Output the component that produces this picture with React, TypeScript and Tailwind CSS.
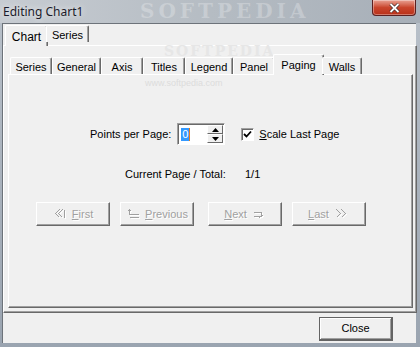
import type { ReactNode } from "react";

const body = "font-['Liberation_Sans',Arial,sans-serif] text-[11px] text-black";

function Tab({ label, w, active, cls = "" }: { label: string; w: number; active?: boolean; cls?: string }) {
  if (active)
    return (
      <div
        style={{ width: w + 4 }}
        className={`relative z-10 -mx-[2px] -mb-[1px] flex h-[21px] items-start justify-center rounded-t-[2px] border-l border-t border-r border-l-white border-t-white border-r-[#696969] bg-[#f0f0f0] pt-[2px] shadow-[inset_-1px_0_0_#a0a0a0] ${cls}`}
      >
        {label}
      </div>
    );
  return (
    <div
      style={{ width: w }}
      className={`relative z-10 flex h-[17px] items-start justify-center rounded-t-[2px] border-l border-t border-r border-l-white border-t-white border-r-[#696969] bg-[#f0f0f0] pt-[1px] shadow-[inset_-1px_0_0_#a0a0a0] ${cls}`}
    >
      {label}
    </div>
  );
}

function Btn({ children, w = 74 }: { children: ReactNode; w?: number }) {
  return (
    <div
      style={{ width: w }}
      className="flex h-[24px] items-center justify-center gap-[5px] border border-t-white border-l-white border-r-[#696969] border-b-[#696969] bg-[#f0f0f0] text-[#a0a0a0] shadow-[inset_-1px_-1px_0_#a0a0a0] [text-shadow:1px_1px_0_#fff]"
    >
      {children}
    </div>
  );
}

function Etched({ d, w = 14 }: { d: string; w?: number }) {
  return (
    <svg width={w} height="12" viewBox={`0 0 ${w} 12`} fill="none" strokeWidth="1" shapeRendering="crispEdges">
      <path d={d} stroke="#fff" transform="translate(1 1)" />
      <path d={d} stroke="#a0a0a0" />
    </svg>
  );
}

export default function App() {
  return (
    <div className={`relative flex h-[347px] w-[420px] flex-col overflow-hidden bg-gradient-to-b from-[#b9c1ca] to-[#9aa4b0] ${body}`}>
      {/* title bar */}
      <div className="relative flex h-[23px] items-center overflow-hidden bg-gradient-to-r from-[#c7ccd2] via-[#b5bcc3] to-[#a7afb8] pl-[3px]">
        <span className="absolute left-[140px] top-0 font-['DejaVu_Serif',serif] text-[20px] font-bold leading-[23px] tracking-[4px] text-white/25">
          SOFTPEDIA
        </span>
        <span className="relative font-['Noto_Sans',sans-serif] text-[12px] text-[#1b1b2a] [text-shadow:0_0_6px_#fff]">
          Editing Chart1
        </span>
        <div className="absolute right-[4px] top-0 flex h-[16px] w-[44px] items-center justify-center rounded-b-[4px] border border-t-0 border-[#5b2020] bg-gradient-to-b from-[#e8a193] via-[#c9452c] to-[#b83018] shadow-[inset_0_0_0_1px_rgba(255,255,255,0.35)]">
          <svg width="11" height="10" viewBox="0 0 11 10">
            <path d="M1.5 1 L9.5 9 M9.5 1 L1.5 9" stroke="#3a2a2a" strokeWidth="3.2" />
            <path d="M1.5 1 L9.5 9 M9.5 1 L1.5 9" stroke="#fff" strokeWidth="1.8" />
          </svg>
        </div>
      </div>

      {/* client */}
      <div className="ml-[2px] flex h-[320px] w-[414px] flex-col border-t border-l border-[#6d737a] bg-[#f0f0f0]">
        {/* outer tabs */}
        <div className="flex h-[21px] items-end pl-[2px] pt-[1px]">
          <div className="ml-[2px] flex">
            <Tab label="Chart" w={39} active cls="text-[12px]" />
            <Tab label="Series" w={43} />
          </div>
        </div>

        {/* outer page */}
        <div className="relative flex h-[268px] w-[414px] flex-col border border-t-white border-l-white border-r-[#696969] border-b-[#696969] px-[4px] shadow-[inset_-1px_-1px_0_#a0a0a0]">
          <span className="pointer-events-none absolute left-[160px] top-[-3px] font-['DejaVu_Serif',serif] text-[14px] font-bold leading-[16px] tracking-[2px] text-[#e6e6e6]">
            SOFTPEDIA
          </span>

          {/* inner tabs */}
          <div className="relative mt-[8px] flex h-[20px] items-end pl-[2px]">
            <Tab label="Series" w={42} />
            <Tab label="General" w={49} />
            <Tab label="Axis" w={42} />
            <Tab label="Titles" w={42} />
            <Tab label="Legend" w={48} />
            <Tab label="Panel" w={42} />
            <Tab label="Paging" w={47} active />
            <Tab label="Walls" w={40} />
          </div>

          {/* inner page */}
          <div className="relative flex h-[234px] w-[405px] flex-col border border-t-white border-l-white border-r-[#696969] border-b-[#696969] shadow-[inset_-1px_-1px_0_#a0a0a0]">
            <span className="pointer-events-none absolute left-[136px] top-[3px] text-[9px] leading-[10px] text-[#dcdcdc]">
              www.softpedia.com
            </span>
            <div className="ml-[81px] mt-[48px] flex h-[22px] items-center">
              <span>Points per Page:</span>
              <div className="ml-[6px] flex h-[22px] w-[48px] items-center border border-t-[#a0a0a0] border-l-[#a0a0a0] border-r-white border-b-white bg-white shadow-[inset_1px_1px_0_#696969]">
                <span className="ml-[3px] mt-[1px] bg-[#3399ff] px-[1px] leading-[13px] text-white shadow-[1px_0_0_#e07a1f]">0</span>
                <div className="ml-auto mr-[1px] flex h-[18px] w-[16px] flex-col">
                  <div className="flex h-[9px] items-center justify-center border border-t-white border-l-white border-r-[#696969] border-b-[#696969] bg-[#f0f0f0]">
                    <svg width="7" height="4" viewBox="0 0 7 4"><path d="M3.5 0 L7 4 L0 4Z" fill="#000" /></svg>
                  </div>
                  <div className="flex h-[9px] items-center justify-center border border-t-white border-l-white border-r-[#696969] border-b-[#696969] bg-[#f0f0f0]">
                    <svg width="7" height="4" viewBox="0 0 7 4"><path d="M0 0 L7 0 L3.5 4Z" fill="#000" /></svg>
                  </div>
                </div>
              </div>
              <div className="ml-[16px] flex h-[13px] w-[13px] items-center justify-center border border-t-[#a0a0a0] border-l-[#a0a0a0] border-r-white border-b-white bg-white shadow-[inset_1px_1px_0_#696969]">
                <svg width="9" height="9" viewBox="0 0 9 9">
                  <path d="M1 4 L3.5 6.5 L8 1.5" stroke="#000" strokeWidth="1.8" fill="none" />
                </svg>
              </div>
              <span className="ml-[5px]">
                <span className="underline">S</span>cale Last Page
              </span>
            </div>

            <div className="ml-[116px] mt-[22px] flex h-[14px] items-center">
              <span className="w-[120px]">Current Page / Total:</span>
              <span>1/1</span>
            </div>

            <div className="ml-[27px] mt-[21px] flex">
              <Btn>
                <Etched w={14} d="M6.5 1.5 L2.5 5.5 L6.5 9.5 M9.5 1.5 L5.5 5.5 L9.5 9.5 M11.5 1.5 L11.5 9.5" />
                <span><span className="underline">F</span>irst</span>
              </Btn>
              <div className="w-[10px]" />
              <Btn>
                <Etched w={14} d="M3.5 1.5 L3.5 6.5 L12.5 6.5 M1.5 3.5 L3.5 1.5 L5.5 3.5 M3.5 9.5 L12.5 9.5" />
                <span><span className="underline">P</span>revious</span>
              </Btn>
              <div className="w-[14px]" />
              <Btn>
                <span><span className="underline">N</span>ext</span>
                <Etched w={14} d="M1.5 4.5 L9.5 4.5 M1.5 8.5 L7.5 8.5 M9.5 4.5 L9.5 8.5 M7.5 9.5 L11.5 6.5" />
              </Btn>
              <div className="w-[10px]" />
              <Btn>
                <span><span className="underline">L</span>ast</span>
                <Etched w={16} d="M2.5 1.5 L6.5 5.5 L2.5 9.5 M7.5 1.5 L11.5 5.5 L7.5 9.5" />
              </Btn>
            </div>
          </div>
        </div>

        {/* bottom bar */}
        <div className="flex flex-1 items-start justify-end pr-[23px] pt-[4px]">
          <div className="flex h-[24px] w-[74px] items-center justify-center border border-[#646464] border-r-2 border-b-2 bg-[#f0f0f0] shadow-[inset_1px_1px_0_#fff,inset_-1px_-1px_0_#a0a0a0]">
            Close
          </div>
        </div>
      </div>
    </div>
  );
}
